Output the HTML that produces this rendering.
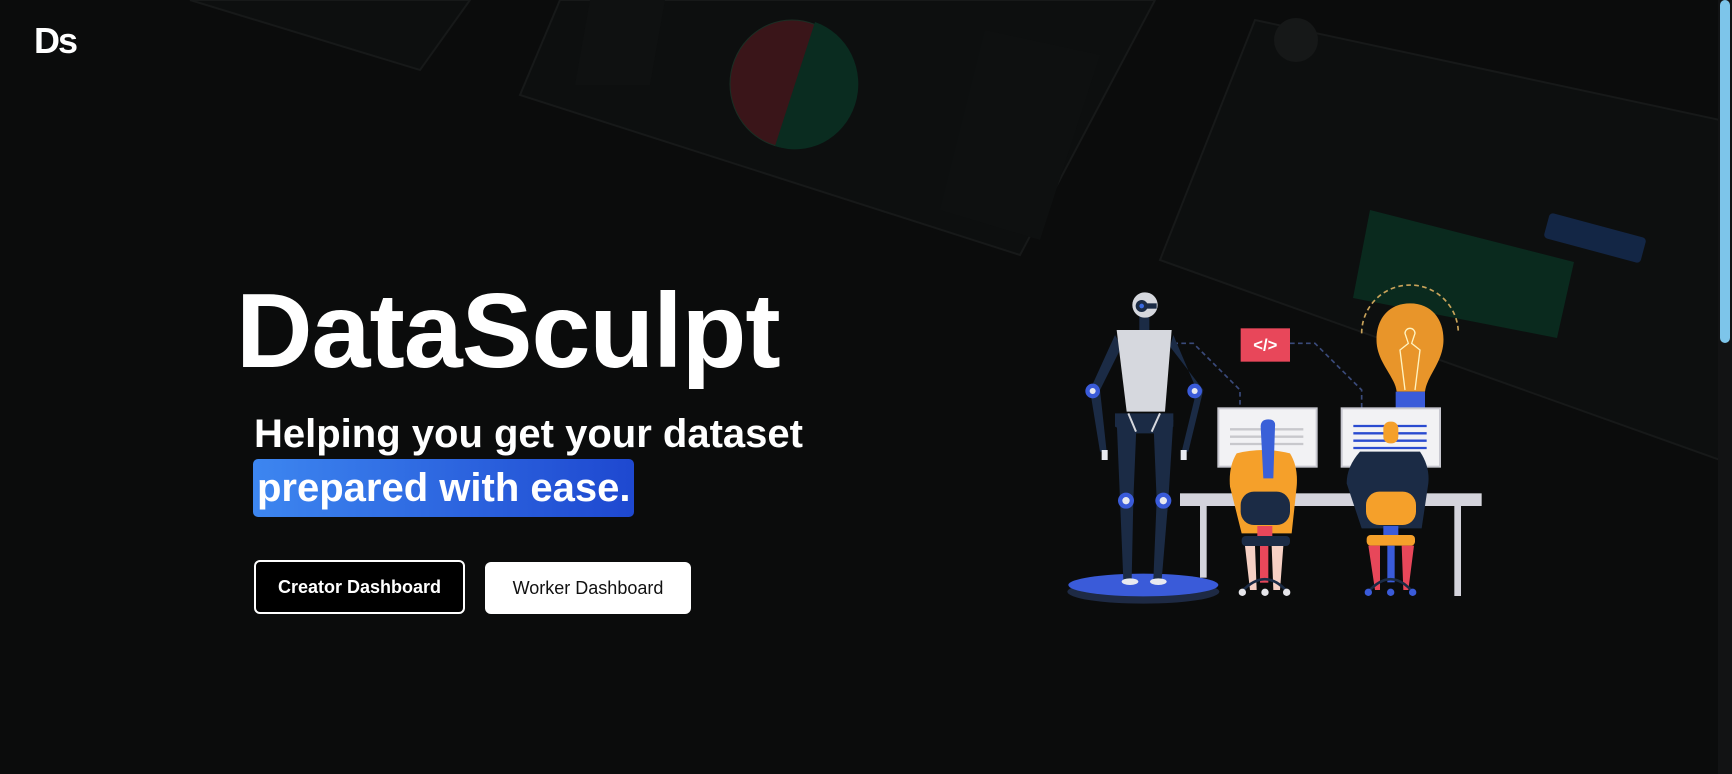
<!DOCTYPE html>
<html><head><meta charset="utf-8"><style>
html,body{margin:0;padding:0;width:1732px;height:774px;overflow:hidden;background:#0b0c0c;font-family:"Liberation Sans",sans-serif;}
.abs{position:absolute}
#logo{left:34px;top:20px;color:#fff;font-weight:700;font-size:36px;letter-spacing:-2px}
#title{left:236px;top:268px;color:#fff;font-weight:700;font-size:106px;letter-spacing:-1px;line-height:1.2}
#sub{left:254px;top:410px;color:#fff;font-weight:700;font-size:40px;line-height:48px}
#hl{left:253px;top:459px;width:381px;height:58px;border-radius:5px;background:linear-gradient(90deg,#3d86f0,#1e48d0);color:#fff;font-weight:700;font-size:40px;line-height:58px;padding-left:4px;box-sizing:border-box}
.btn{height:54px;border-radius:6px;font-size:18px;font-weight:700;display:flex;align-items:center;justify-content:center;box-sizing:border-box}
#b1{left:254px;top:560px;width:211px;background:#000;border:2px solid #fff;color:#fff}
#b2{left:485px;top:562px;width:206px;height:52px;background:#fff;color:#111;font-weight:400}
#track{left:1718px;top:0;width:14px;height:774px;background:#121314}
#thumb{left:1720px;top:0;width:10px;height:343px;background:#7dc5ea;border-radius:5px}
</style></head><body>
<svg class="abs" style="left:0;top:0" width="1732" height="774">
 <g fill="#0d0f0f" stroke="#171919" stroke-width="2">
  <path d="M190 0 L420 70 L470 0Z"/>
  <path d="M560 0 L520 95 L1020 255 L1155 0Z"/>
  <path d="M1255 20 L1160 260 L1720 460 L1720 120 Z"/>
 </g>
 <rect x="590" y="0" width="75" height="85" fill="#0f1111" transform="skewX(-10)"/>
 <path d="M985 30 L1100 55 L1040 240 L940 210Z" fill="#0e1010"/>
 <ellipse cx="792" cy="84" rx="62" ry="64" fill="#3a1519" stroke="#1a2e24"/>
 <path d="M815 22 A62 64 0 0 1 775 146 Z" fill="#0a2c20"/>
 <path d="M1370 210 L1574 262 L1557 338 L1353 298Z" fill="#0a2a1e"/>
 <rect x="1545" y="225" width="100" height="26" rx="4" fill="#152c52" opacity="0.8" transform="rotate(15 1595 238)"/>
 <circle cx="1296" cy="40" r="22" fill="#161818"/>
</svg>
<div id="logo" class="abs">Ds</div>
<div id="title" class="abs">DataSculpt</div>
<div id="sub" class="abs">Helping you get your dataset</div>
<div id="hl" class="abs">prepared with ease.</div>
<div id="b1" class="abs btn">Creator Dashboard</div>
<div id="b2" class="abs btn">Worker Dashboard</div>

<svg class="abs" style="left:1050px;top:280px" width="450" height="330" viewBox="0 0 1350 990">
 <g fill="none" stroke="#3a4a7a" stroke-width="5" stroke-dasharray="14 10">
  <path d="M370 190 H430 L570 330 V385"/>
  <path d="M720 190 H795 L935 330 V385"/>
  <path d="M935 160 A140 140 0 0 1 1225 160" stroke="#c9a35a"/>
 </g>
 <rect x="572" y="145" width="148" height="100" fill="#e8475a"/>
 <text x="646" y="212" fill="#fff" font-family="Liberation Sans,sans-serif" font-weight="700" font-size="50" text-anchor="middle">&lt;/&gt;</text>
 <path d="M1080 70 C1150 70 1185 125 1180 190 C1175 250 1130 290 1125 335 H1040 C1035 290 985 250 980 190 C975 125 1010 70 1080 70Z" fill="#e8952a"/>
 <path d="M1065 330 L1050 210 L1075 190 L1065 160 A14 14 0 1 1 1095 160 L1085 190 L1110 210 L1095 330" fill="none" stroke="#fff3c0" stroke-width="4"/>
 <rect x="1037" y="335" width="88" height="50" fill="#3a5bd9"/>
 <ellipse cx="280" cy="935" rx="228" ry="36" fill="#1e2a44"/>
 <ellipse cx="280" cy="915" rx="225" ry="34" fill="#3a5bd9"/>
 <g fill="#1b2b45">
  <path d="M195 165 L120 330 L150 515 L170 515 L150 330 L215 200Z"/>
  <path d="M370 165 L440 330 L395 515 L415 515 L460 330 L360 200Z"/>
  <path d="M195 400 H370 V440 L335 460 H235 L195 440Z"/>
  <path d="M200 420 H260 L250 660 L245 900 H220 L210 660Z"/>
  <path d="M310 420 H370 L355 660 L335 900 H310 L320 660Z"/>
  <rect x="268" y="105" width="30" height="50"/>
 </g>
 <path d="M200 150 H365 L345 395 H230Z" fill="#d6d8de"/>
 <path d="M235 400 L258 455 M330 400 L305 455" stroke="#d6d8de" stroke-width="6"/>
 <circle cx="285" cy="75" r="38" fill="#d6d8de"/>
 <circle cx="275" cy="78" r="18" fill="#1b2b45"/><circle cx="275" cy="78" r="7" fill="#3a6ae0"/>
 <rect x="290" y="70" width="30" height="16" fill="#1b2b45"/>
 <g fill="#3a5bd9"><circle cx="128" cy="333" r="22"/><circle cx="434" cy="333" r="22"/><circle cx="228" cy="662" r="24"/><circle cx="340" cy="662" r="24"/></g>
 <g fill="#e8eaf0"><circle cx="128" cy="333" r="9"/><circle cx="434" cy="333" r="9"/><circle cx="228" cy="662" r="11"/><circle cx="340" cy="662" r="11"/>
  <ellipse cx="240" cy="905" rx="25" ry="10"/><ellipse cx="325" cy="905" rx="25" ry="10"/>
  <path d="M155 510 h18 v30 h-18z M392 510 h18 v30 h-18z"/></g>
 <rect x="505" y="385" width="295" height="175" fill="#f2f2f4" stroke="#c8c8d0" stroke-width="6"/>
 <g stroke="#c8c8cc" stroke-width="7"><path d="M540 448H760M540 470H760M540 492H760"/></g>
 <rect x="875" y="385" width="295" height="175" fill="#f2f2f4" stroke="#c8c8d0" stroke-width="6"/>
 <g stroke="#2a4bd0" stroke-width="7"><path d="M910 438H1130M910 460H1130M910 482H1130M910 504H1130"/></g>
 <rect x="390" y="640" width="905" height="38" fill="#d4d4dc"/>
 <rect x="450" y="678" width="20" height="215" fill="#d4d4dc"/>
 <rect x="1213" y="678" width="20" height="270" fill="#d4d4dc"/>
 <path d="M560 520 Q640 500 720 520 Q745 560 740 620 L725 760 H575 L540 620 Q535 560 560 520Z" fill="#f5a02a"/>
 <path d="M632 440 Q632 418 655 418 Q678 418 675 440 L670 595 H640Z" fill="#3a60d8"/>
 <rect x="572" y="635" width="148" height="100" rx="40" fill="#1b2b45"/>
 <rect x="622" y="738" width="45" height="30" fill="#e8475a"/>
 <rect x="575" y="768" width="145" height="30" rx="12" fill="#1b2b45"/>
 <path d="M585 798 H615 L620 930 H600Z M665 798 H700 L690 930 H670Z" fill="#f6d0c4"/>
 <rect x="630" y="798" width="25" height="110" fill="#e8475a"/>
 <path d="M575 935 Q645 860 712 935" fill="none" stroke="#1b2b45" stroke-width="8"/>
 <g fill="#e6e6ea"><circle cx="577" cy="937" r="11"/><circle cx="645" cy="937" r="11"/><circle cx="710" cy="937" r="11"/></g>
 <rect x="1000" y="425" width="45" height="65" rx="20" fill="#f5a02a"/>
 <path d="M930 515 H1110 Q1140 560 1135 610 L1115 745 H935 L890 610 Q890 560 930 515Z" fill="#1b2b45"/>
 <rect x="948" y="635" width="150" height="100" rx="40" fill="#f5a02a"/>
 <rect x="1000" y="738" width="45" height="28" fill="#3a5bd9"/>
 <rect x="950" y="765" width="145" height="32" rx="12" fill="#f5a02a"/>
 <path d="M955 797 H990 L990 930 H975Z M1055 797 H1092 L1075 930 H1060Z" fill="#e8475a"/>
 <rect x="1012" y="797" width="22" height="110" fill="#3a5bd9"/>
 <path d="M955 935 Q1022 860 1088 935" fill="none" stroke="#1b2b45" stroke-width="8"/>
 <g fill="#3a5bd9"><circle cx="955" cy="937" r="11"/><circle cx="1022" cy="937" r="11"/><circle cx="1088" cy="937" r="11"/></g>
</svg>
<div id="track" class="abs"></div>
<div id="thumb" class="abs"></div>
</body></html>
